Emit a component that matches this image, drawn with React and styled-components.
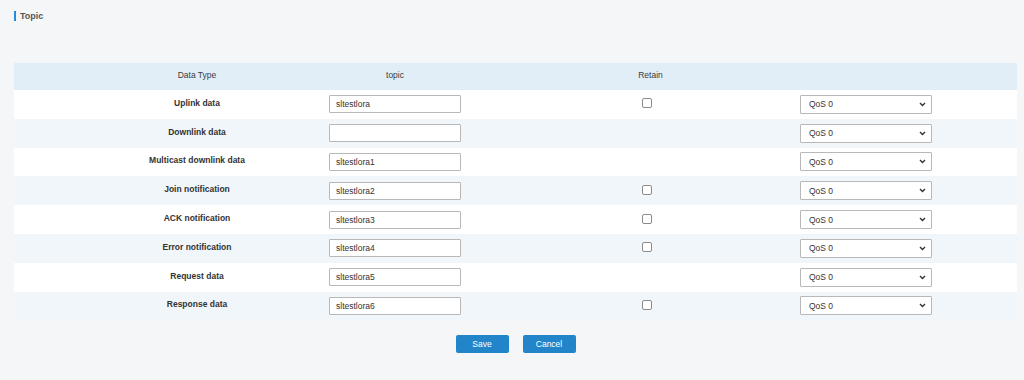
import React from 'react';
import styled, { createGlobalStyle } from 'styled-components';

const Global = createGlobalStyle`
  html, body {
    margin: 0;
    padding: 0;
    background: #f4f6f7;
    font-family: "Liberation Sans", Arial, sans-serif;
    color: #333;
  }
`;

const Page = styled.div`
  width: 1024px;
  height: 380px;
  padding: 11px 7px 0 14px;
  box-sizing: border-box;
`;

const Title = styled.div`
  display: flex;
  align-items: center;
  gap: 4px;
  height: 10px;
  font-size: 9px;
  font-weight: bold;
  color: #555;
  &::before {
    content: '';
    width: 2px;
    height: 10px;
    background: #2b8ad9;
  }
`;

const Table = styled.div`
  margin-top: 42px;
  width: 1003px;
`;

const Row = styled.div`
  display: grid;
  grid-template-columns: 315px 132px 339px 132px 1fr;
  align-items: center;
  height: ${({ $head }) => ($head ? '27px' : '28.8px')};
  background: ${({ $bg }) => $bg};
`;

const Label = styled.div`
  padding: 0 32px 0 83px;
  text-align: center;
  font-size: 8.5px;
  font-weight: ${({ $head }) => ($head ? 'normal' : 'bold')};
  color: ${({ $head }) => ($head ? '#3c3c3c' : '#333')};
  margin-top: -3px;
`;

const HeadText = styled.div`
  text-align: center;
  font-size: 8.5px;
  color: #3c3c3c;
  margin-top: -3px;
  padding-left: ${({ $pl }) => $pl || 0}px;
`;

const Input = styled.input`
  width: 132px;
  height: 18px;
  box-sizing: border-box;
  border: 1px solid #b8b8b8;
  border-radius: 1px;
  background: #fff;
  padding: 0 6px;
  font-family: "Liberation Sans", Arial, sans-serif;
  font-size: 8.5px;
  color: #333;
  outline: none;
`;

const CheckCell = styled.div`
  display: flex;
  justify-content: center;
  padding-left: 32px;
`;

const Check = styled.span`
  width: 8px;
  height: 8px;
  border: 1px solid #8a8a8a;
  border-radius: 2px;
  background: #fff;
  margin-top: -2px;
`;

const Select = styled.div`
  width: 132px;
  height: 19px;
  box-sizing: border-box;
  border: 1px solid #b8b8b8;
  border-radius: 1px;
  background: #fff;
  display: flex;
  align-items: center;
  justify-content: space-between;
  padding: 0 5px 0 8px;
  font-size: 8.5px;
  color: #333;
`;

const Actions = styled.div`
  display: flex;
  justify-content: center;
  gap: 14px;
  margin-top: 15px;
`;

const Button = styled.button`
  width: 53px;
  height: 18px;
  border: none;
  border-radius: 2px;
  background: #2285c9;
  color: #fff;
  font-family: "Liberation Sans", Arial, sans-serif;
  font-size: 8.5px;
  padding: 0;
`;

const rows = [
  { name: 'Uplink data', topic: 'sltestlora', retain: true },
  { name: 'Downlink data', topic: '', retain: false },
  { name: 'Multicast downlink data', topic: 'sltestlora1', retain: false },
  { name: 'Join notification', topic: 'sltestlora2', retain: true },
  { name: 'ACK notification', topic: 'sltestlora3', retain: true },
  { name: 'Error notification', topic: 'sltestlora4', retain: true },
  { name: 'Request data', topic: 'sltestlora5', retain: false },
  { name: 'Response data', topic: 'sltestlora6', retain: true },
];

const Chevron = () => (
  <svg width="7" height="5" viewBox="0 0 7 5">
    <path d="M1 1 L3.5 3.5 L6 1" fill="none" stroke="#333" strokeWidth="1.4" />
  </svg>
);

export default function App() {
  return (
    <Page>
      <Global />
      <Title>Topic</Title>
      <Table>
        <Row $head $bg="#e1eef8">
          <Label $head>Data Type</Label>
          <HeadText>topic</HeadText>
          <HeadText $pl={40}>Retain</HeadText>
          <div />
          <div />
        </Row>
        {rows.map((r, i) => (
          <Row key={r.name} $bg={i % 2 ? '#f1f6fa' : '#fff'}>
            <Label>{r.name}</Label>
            <Input defaultValue={r.topic} />
            <CheckCell>{r.retain && <Check />}</CheckCell>
            <Select>
              <span>QoS 0</span>
              <Chevron />
            </Select>
            <div />
          </Row>
        ))}
      </Table>
      <Actions>
        <Button>Save</Button>
        <Button>Cancel</Button>
      </Actions>
    </Page>
  );
}
